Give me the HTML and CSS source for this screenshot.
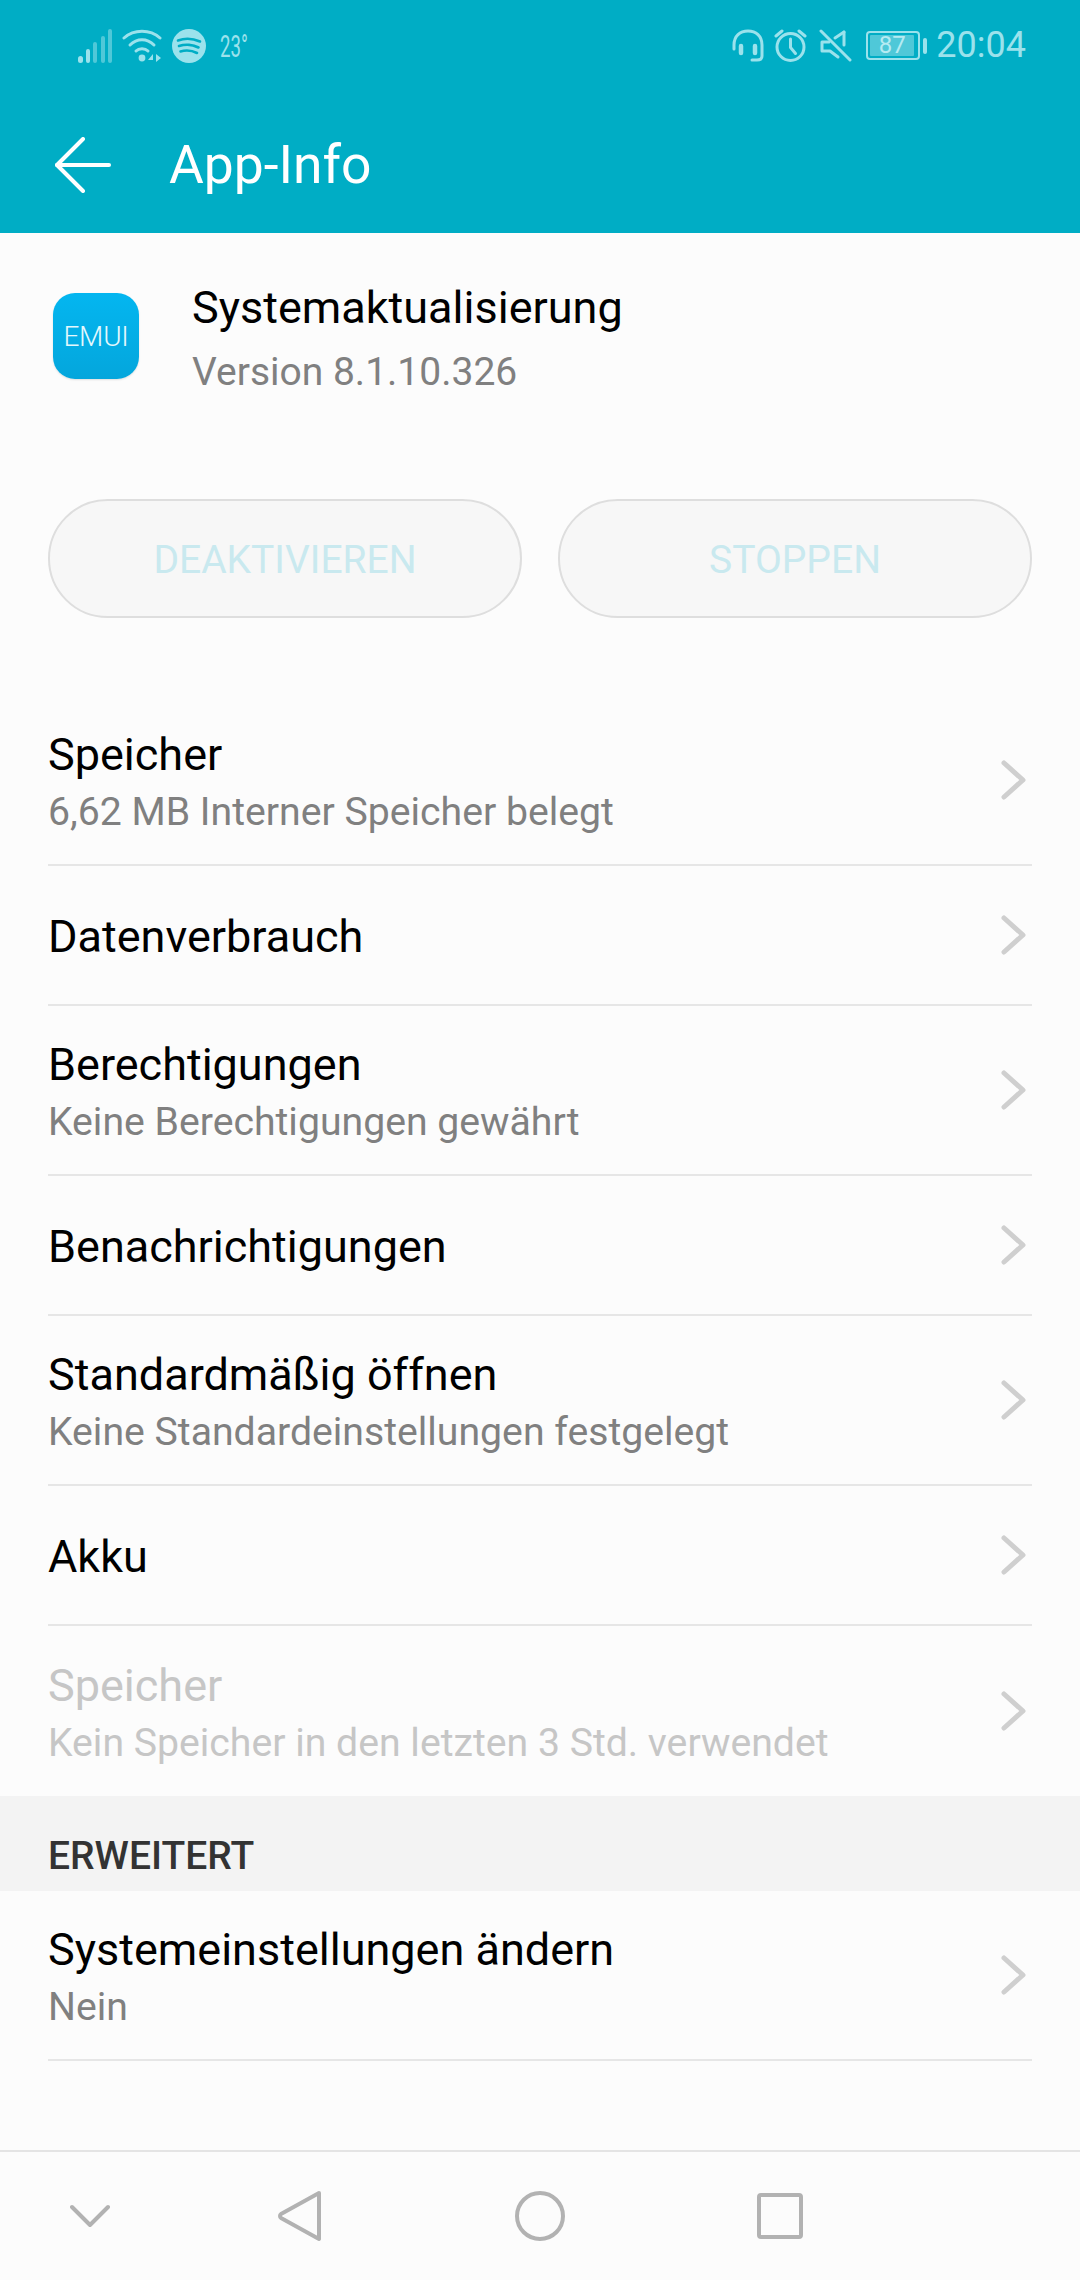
FILE: index.html
```html
<!DOCTYPE html>
<html lang="de">
<head>
<meta charset="utf-8">
<title>App-Info</title>
<link rel="stylesheet" href="styles.css">
</head>
<body>
<div class="phone">
  <header class="appbar">
    <div class="status">
      <div class="status-left">
        <svg class="ic-signal" width="35" height="34" viewBox="0 0 35 34"><g fill="#9be2ec"><rect x="0" y="27" width="5" height="7" rx="2.5"/><rect x="8" y="20" width="4" height="14" rx="2"/></g><g fill="#4fc8d8"><rect x="15" y="13" width="4" height="21" rx="2"/><rect x="23" y="7" width="4" height="27" rx="2"/><rect x="30" y="0" width="4" height="34" rx="2"/></g></svg>
        <svg class="ic-wifi" width="40" height="34" viewBox="0 0 40 34"><g fill="none" stroke="#9be2ec" stroke-width="3" stroke-linecap="round"><path d="M2 9C12 0 28 0 38 9"/><path d="M8 16C15 9 25 9 32 16"/><path d="M14 22C17 19 23 19 26 22"/></g><circle cx="20" cy="29" r="3.4" fill="#9be2ec"/><path d="M26 31l5-6v6zM34 25l5 4-5 4z" fill="#9be2ec"/></svg>
        <svg class="ic-spotify" width="34" height="34" viewBox="0 0 34 34"><circle cx="17" cy="17" r="17" fill="#9be2ec"/><g fill="none" stroke="#00adc5" stroke-width="2.6" stroke-linecap="round"><path d="M6 11.500C13 9 21 9.500 28 12.500"/><path d="M7 17C13 15 21 15.500 26.500 18.500"/><path d="M8.500 22.500C13.500 21 20 21.500 25 24"/></g></svg>
        <span class="temp">23°</span>
      </div>
      <div class="status-right">
        <svg class="ic-head" width="32" height="33" viewBox="0 0 32 33"><g fill="none" stroke="#9be2ec" stroke-width="3" stroke-linecap="round"><path d="M2 20V16C2 7 8 2 16 2s14 5 14 14v11c0 3-2 4-5 4h-5"/><path d="M9 17v7M23 17v7" stroke-width="4.500"/></g></svg>
        <svg class="ic-alarm" width="33" height="33" viewBox="0 0 33 33"><g fill="none" stroke="#9be2ec" stroke-width="3" stroke-linecap="round"><circle cx="16.500" cy="18" r="13.500"/><path d="M16.500 10v8.500l5 6"/><path d="M2 7l6-5M31 7l-6-5"/></g></svg>
        <svg class="ic-mute" width="33" height="33" viewBox="0 0 33 33"><g fill="none" stroke="#9be2ec" stroke-width="3" stroke-linecap="round" stroke-linejoin="round"><path d="M2 2l29 29"/><path d="M25 3v13"/><path d="M25 3l-9 6"/><path d="M10 13H3v9h8l8 6"/></g></svg>
        <div class="battery"><div class="battery-body"><span class="battery-fill">87</span></div><i class="battery-tip"></i></div>
        <span class="clock">20:04</span>
      </div>
    </div>
    <div class="toolbar">
      <svg class="back" width="56" height="56" viewBox="0 0 56 56"><g fill="none" stroke="#fff" stroke-width="4" stroke-linecap="round" stroke-linejoin="round"><path d="M2 28h52"/><path d="M28 2L2 28l26 26"/></g></svg>
      <h1 class="title">App-Info</h1>
    </div>
  </header>

  <section class="app">
    <div class="app-icon"><span class="app-icon-text">EMUI</span></div>
    <div class="app-text">
      <div class="app-name">Systemaktualisierung</div>
      <div class="app-version">Version 8.1.10.326</div>
    </div>
  </section>

  <div class="buttons">
    <div class="btn">DEAKTIVIEREN</div>
    <div class="btn">STOPPEN</div>
  </div>

  <ul class="list">
    <li class="row two"><div class="row-text"><div class="row-title">Speicher</div><div class="row-sub">6,62 MB Interner Speicher belegt</div></div><svg class="chev" width="26" height="40" viewBox="0 0 26 40"><path d="M3 3l19 17L3 37"/></svg></li>
    <li class="row one"><div class="row-text"><div class="row-title">Datenverbrauch</div></div><svg class="chev" width="26" height="40" viewBox="0 0 26 40"><path d="M3 3l19 17L3 37"/></svg></li>
    <li class="row two"><div class="row-text"><div class="row-title">Berechtigungen</div><div class="row-sub">Keine Berechtigungen gewährt</div></div><svg class="chev" width="26" height="40" viewBox="0 0 26 40"><path d="M3 3l19 17L3 37"/></svg></li>
    <li class="row one"><div class="row-text"><div class="row-title">Benachrichtigungen</div></div><svg class="chev" width="26" height="40" viewBox="0 0 26 40"><path d="M3 3l19 17L3 37"/></svg></li>
    <li class="row two"><div class="row-text"><div class="row-title">Standardmäßig öffnen</div><div class="row-sub">Keine Standardeinstellungen festgelegt</div></div><svg class="chev" width="26" height="40" viewBox="0 0 26 40"><path d="M3 3l19 17L3 37"/></svg></li>
    <li class="row one"><div class="row-text"><div class="row-title">Akku</div></div><svg class="chev" width="26" height="40" viewBox="0 0 26 40"><path d="M3 3l19 17L3 37"/></svg></li>
    <li class="row two disabled last"><div class="row-text"><div class="row-title">Speicher</div><div class="row-sub">Kein Speicher in den letzten 3 Std. verwendet</div></div><svg class="chev" width="26" height="40" viewBox="0 0 26 40"><path d="M3 3l19 17L3 37"/></svg></li>
  </ul>

  <div class="section-head">ERWEITERT</div>

  <ul class="list">
    <li class="row two"><div class="row-text"><div class="row-title">Systemeinstellungen ändern</div><div class="row-sub">Nein</div></div><svg class="chev" width="26" height="40" viewBox="0 0 26 40"><path d="M3 3l19 17L3 37"/></svg></li>
  </ul>

  <nav class="navbar">
    <svg width="40" height="24" viewBox="0 0 40 24"><path class="nav-stroke" d="M2 3l18 18L38 3"/></svg>
    <svg width="44" height="52" viewBox="0 0 44 52"><path class="nav-stroke" d="M41 3L3 24a2.500 2.500 0 0 0 0 4l38 21z"/></svg>
    <svg width="50" height="50" viewBox="0 0 50 50"><circle class="nav-stroke" cx="25" cy="25" r="23"/></svg>
    <svg width="46" height="46" viewBox="0 0 46 46"><rect class="nav-stroke" x="2" y="2" width="42" height="42" rx="2"/></svg>
  </nav>
</div>
</body>
</html>
```

FILE: styles.css
```css
* { box-sizing: border-box; }
html, body { margin: 0; padding: 0; }
body { background: #fcfcfc; font-family: Roboto, "Liberation Sans", sans-serif; }
.phone { width: 1080px; height: 2280px; display: flex; flex-direction: column; overflow: hidden; background: #fcfcfc; position: relative; }

.appbar { background: #00adc5; height: 233px; flex: none; }
.status { height: 72px; display: flex; justify-content: space-between; padding: 29px 54px 0 78px; }
.status-left, .status-right { display: flex; align-items: flex-start; }
.ic-wifi { margin-left: 9px; }
.ic-spotify { margin-left: 10px; }
.temp { margin-left: 14px; margin-top: 2px; font-size: 31px; line-height: 32px; color: #9be2ec; transform: scaleX(.6); transform-origin: left center; width: 28px; white-space: nowrap; }
.ic-alarm { margin-left: 10px; }
.ic-mute { margin-left: 12px; }
.battery { margin-left: 14px; margin-top: 2px; display: flex; align-items: center; }
.battery-body { width: 54px; height: 29px; border: 2px solid #9be2ec; border-radius: 4px; padding: 2px; }
.battery-fill { display: block; width: 44px; height: 21px; background: #4fc8d8; border-radius: 1px; color: #b5ebf2; font-size: 24px; line-height: 21px; text-align: center; }
.battery-tip { width: 4px; height: 16px; background: #9be2ec; border-radius: 2px; margin-left: 3px; }
.clock { margin-left: 9px; margin-top: -1px; font-size: 36px; line-height: 34px; color: #9be2ec; }

.toolbar { height: 161px; display: flex; align-items: center; padding: 24px 0 0 55px; }
.back { flex: none; }
.title { margin: 0 0 0 58px; font-size: 53.400px; line-height: 60px; font-weight: 400; color: #fff; }

.app { display: flex; align-items: flex-start; padding: 47px 48px 0 53px; height: 266px; flex: none; }
.app-icon { width: 86px; height: 86px; margin-top: 13px; border-radius: 22px; background: linear-gradient(#04b6f0, #04a6dc); display: flex; align-items: center; justify-content: center; box-shadow: 0 1px 2px rgba(0,0,0,.12); flex: none; }
.app-icon-text { font-size: 28px; font-weight: 300; color: #e4f8fd; letter-spacing: -.2px; }
.app-text { margin-left: 53px; }
.app-name { font-size: 45px; line-height: 56px; color: #000; }
.app-version { font-size: 39px; line-height: 50px; margin-top: 11px; color: #808080; }

.buttons { display: flex; gap: 36px; padding: 0 48px; flex: none; }
.btn { flex: 1; height: 119px; border: 2px solid #dedede; border-radius: 60px; background: #f7f7f7; color: #c9e9ef; font-size: 39px; padding-top: 2px; display: flex; align-items: center; justify-content: center; }

.list { list-style: none; margin: 0; padding: 0 48px; flex: none; }
.buttons + .list { margin-top: 78px; }
.row { display: flex; align-items: center; justify-content: space-between; border-bottom: 2px solid #e6e6e6; }
.row.one { height: 140px; }
.row.two { height: 170px; }
.row.last { border-bottom: 0; }
.row-text { min-width: 0; padding-top: 4px; }
.row-title { font-size: 45px; line-height: 54px; color: #000; }
.row-sub { font-size: 39.200px; line-height: 48px; margin-top: 6px; color: #808080; }
.disabled .row-title, .disabled .row-sub { color: #c6c6c6; }
.chev { flex: none; margin-right: 5px; }
.chev path { fill: none; stroke: #cfcfcf; stroke-width: 5; stroke-linecap: round; stroke-linejoin: round; }

.section-head { height: 95px; flex: none; background: #f3f3f3; padding: 38px 48px 0; font-size: 39px; line-height: 44px; font-weight: 500; color: #333; }

.navbar { position: absolute; left: 0; right: 0; bottom: 0; height: 130px; border-top: 2px solid #e4e4e4; background: #fcfcfc; display: grid; grid-template-columns: 180px 240px 240px 240px; align-items: center; justify-items: center; }
.nav-stroke { fill: none; stroke: #b2b2b2; stroke-width: 4; stroke-linejoin: round; stroke-linecap: round; }
```
